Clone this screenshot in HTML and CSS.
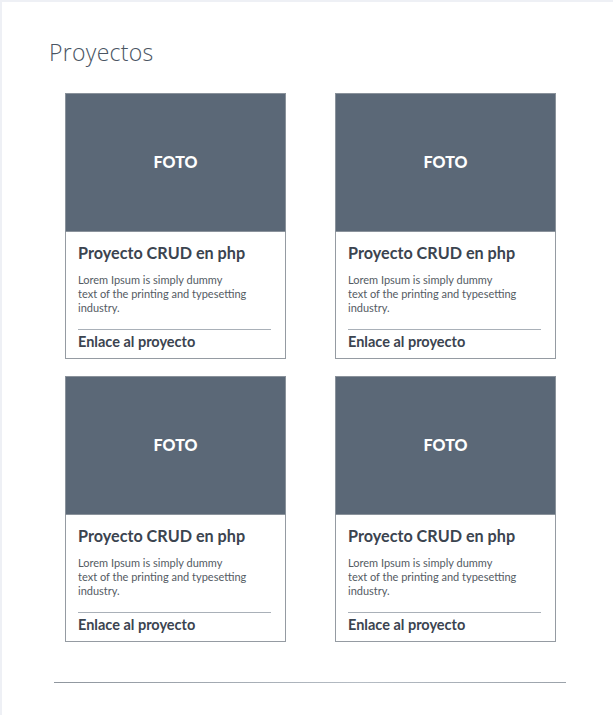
FILE: index.html
```html
<!DOCTYPE html>
<html lang="es">
<head>
<meta charset="utf-8">
<title>Proyectos</title>
<link rel="stylesheet" href="styles.css">
</head>
<body>
<main class="page">
  <h1 class="heading">Proyectos</h1>
  <section class="grid">
    <article class="card">
      <div class="photo">FOTO</div>
      <div class="body">
        <h2 class="title">Proyecto CRUD en php</h2>
        <p class="text">Lorem Ipsum is simply dummy<br>text of the printing and typesetting<br>industry.</p>
        <hr class="divider">
        <a class="link" href="#">Enlace al proyecto</a>
      </div>
    </article>
    <article class="card">
      <div class="photo">FOTO</div>
      <div class="body">
        <h2 class="title">Proyecto CRUD en php</h2>
        <p class="text">Lorem Ipsum is simply dummy<br>text of the printing and typesetting<br>industry.</p>
        <hr class="divider">
        <a class="link" href="#">Enlace al proyecto</a>
      </div>
    </article>
    <article class="card">
      <div class="photo">FOTO</div>
      <div class="body">
        <h2 class="title">Proyecto CRUD en php</h2>
        <p class="text">Lorem Ipsum is simply dummy<br>text of the printing and typesetting<br>industry.</p>
        <hr class="divider">
        <a class="link" href="#">Enlace al proyecto</a>
      </div>
    </article>
    <article class="card">
      <div class="photo">FOTO</div>
      <div class="body">
        <h2 class="title">Proyecto CRUD en php</h2>
        <p class="text">Lorem Ipsum is simply dummy<br>text of the printing and typesetting<br>industry.</p>
        <hr class="divider">
        <a class="link" href="#">Enlace al proyecto</a>
      </div>
    </article>
  </section>
  <hr class="footer-line">
</main>
</body>
</html>
```
FILE: styles.css
```css
* { box-sizing: border-box; }
html, body { margin: 0; padding: 0; background: #fff; }
body { font-family: Lato, "Noto Sans", sans-serif; }

.page {
  height: 715px;
  border-left: 2px solid #eef0f5;
  border-top: 2px solid #eef0f5;
  padding: 35px 0 0 47px;
}

.heading {
  margin: 0;
  font-family: "Open Sans", Lato, sans-serif;
  font-weight: 300;
  font-size: 23px;
  line-height: 31px;
  color: #4a5563;
  letter-spacing: 0.3px;
}

.grid {
  display: grid;
  grid-template-columns: 221px 221px;
  column-gap: 49px;
  row-gap: 17px;
  margin: 25px 0 0 16px;
}

.card {
  border: 1px solid #959ba2;
  background: #fff;
}

.photo {
  height: 139px;
  margin: -1px -1px 0 -1px;
  background: #5b6877;
  border: 1px solid #8a929b;
  color: #fff;
  font-weight: 900;
  font-size: 16px;
  display: flex;
  align-items: center;
  justify-content: center;
  padding-bottom: 2px;
}

.body {
  padding: 10px 14px 7px 12px;
}

.title {
  margin: 0;
  font-size: 16.2px;
  line-height: 21px;
  font-weight: 700;
  color: #3b4450;
}

.text {
  margin: 10px 0 0;
  font-size: 11px;
  line-height: 14px;
  color: #545b63;
}

.divider {
  margin: 14px 0 0;
  border: 0;
  height: 1px;
  background: #a9b0b8;
}

.link {
  display: block;
  margin-top: 3px;
  font-size: 14.5px;
  line-height: 18px;
  font-weight: 700;
  color: #3b4450;
  text-decoration: none;
}

.footer-line {
  margin: 40px 0 0 5px;
  width: 512px;
  border: 0;
  height: 1px;
  background: linear-gradient(90deg, #8f969e, #b5bcc4 60%, #9ba2aa);
}
```
